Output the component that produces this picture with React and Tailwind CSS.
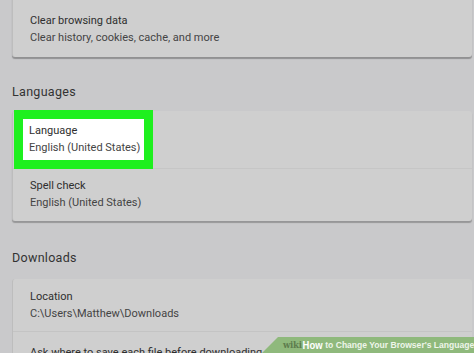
import React from "react";

function Row({ title, sub, className = "" }) {
  return (
    <div className={"flex flex-col gap-[3px] whitespace-nowrap " + className}>
      <div className="text-[11px] leading-[14px] text-[#2e2e2e]">{title}</div>
      <div className="text-[11px] leading-[14px] text-[#444]">{sub}</div>
    </div>
  );
}

export default function App() {
  return (
    <div className="relative w-[474px] h-[353px] overflow-hidden bg-[#c9c9cb] font-['Roboto',sans-serif]">
      {/* Top card */}
      <div className="ml-[12px] mr-[2px] mt-[-6px] bg-[#cfcfcf] rounded-b-[3px] border-l border-[#bdbdbd] shadow-[0_2px_1px_rgba(0,0,0,0.28)] pl-[17px] pt-[20px] pb-[12px]">
        <Row title="Clear browsing data" sub="Clear history, cookies, cache, and more" />
      </div>

      {/* Languages */}
      <div className="pl-[12px] pt-[27px] pb-[12px] text-[12.5px] leading-[15px] text-[#333] tracking-[0.3px]">Languages</div>
      <div className="ml-[12px] mr-[2px] bg-[#cfcfcf] rounded-[3px] border-l border-[#bdbdbd] shadow-[0_2px_1px_rgba(0,0,0,0.25)] flex flex-col">
        <div className="h-[58px] border-b border-[#c6c6c6] flex items-start">
          <div className="ml-[1px] -mt-[1px] w-[139px] h-[59px] bg-[#1ef01e] p-[9px]">
            <div className="w-full h-full bg-white pl-[6px] pt-[5px]">
              <Row title="Language" sub="English (United States)" />
            </div>
          </div>
        </div>
        <div className="h-[52px] pl-[17px] pt-[10px]">
          <Row title="Spell check" sub="English (United States)" />
        </div>
      </div>

      {/* Downloads */}
      <div className="pl-[12px] pt-[29px] pb-[14px] text-[12.5px] leading-[15px] text-[#333] tracking-[0.3px]">Downloads</div>
      <div className="ml-[12px] mr-[2px] bg-[#cfcfcf] rounded-[3px] border-l border-[#bdbdbd] flex flex-col">
        <div className="h-[53px] border-b border-[#c4c4c4] pl-[17px] pt-[11px]">
          <Row title="Location" sub="C:\Users\Matthew\Downloads" />
        </div>
        <div className="pl-[17px] pt-[14px] text-[11px] leading-[14px] text-[#2e2e2e] whitespace-nowrap">
          Ask where to save each file before downloading
        </div>
      </div>

      {/* wikiHow banner */}
      <div className="absolute right-0 bottom-0 w-[212px] h-[16px]">
        <svg className="absolute inset-0" width="212" height="16" viewBox="0 0 212 16">
          <polygon points="0,16 16,0 212,0 212,16" fill="#8fb97c" />
        </svg>
        <div className="relative flex items-center h-full pl-[21px] whitespace-nowrap">
          <div className="flex items-center origin-left scale-x-[0.9] text-[9.5px] leading-[16px]">
            <span className="font-['DejaVu_Serif',serif] font-bold text-[#5e7d4e] tracking-[-0.3px]">wiki</span>
            <span className="font-['Liberation_Sans',sans-serif] font-bold text-white ml-[1px] text-[10.5px]">How</span>
            <span className="font-['Liberation_Sans',sans-serif] font-bold text-[#eef5ea] ml-[3px]">to Change Your Browser's Language</span>
          </div>
        </div>
      </div>
    </div>
  );
}
